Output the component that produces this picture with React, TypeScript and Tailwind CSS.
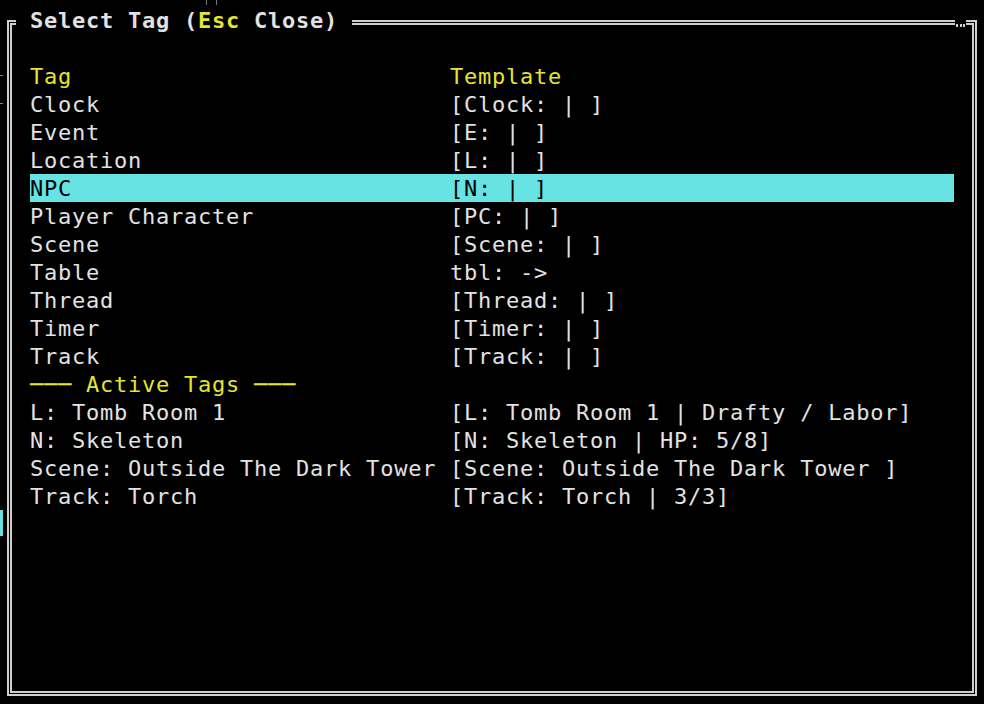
const tags: [string, string][] = [
  ["Clock", "[Clock: | ]"],
  ["Event", "[E: | ]"],
  ["Location", "[L: | ]"],
  ["NPC", "[N: | ]"],
  ["Player Character", "[PC: | ]"],
  ["Scene", "[Scene: | ]"],
  ["Table", "tbl: ->"],
  ["Thread", "[Thread: | ]"],
  ["Timer", "[Timer: | ]"],
  ["Track", "[Track: | ]"],
];

const active: [string, string][] = [
  ["L: Tomb Room 1", "[L: Tomb Room 1 | Drafty / Labor]"],
  ["N: Skeleton", "[N: Skeleton | HP: 5/8]"],
  ["Scene: Outside The Dark Tower", "[Scene: Outside The Dark Tower ]"],
  ["Track: Torch", "[Track: Torch | 3/3]"],
];

const selected = "NPC";

function Row({ left, right, className = "" }: { left: string; right: string; className?: string }) {
  return (
    <div className={`flex h-[28px] w-[924px] items-center pt-[2px] whitespace-pre ${className}`}>
      <span className="w-[420px]">{left}</span>
      <span>{right}</span>
    </div>
  );
}

export default function App() {
  return (
    <div
      className="relative h-[704px] w-[984px] overflow-hidden bg-black pl-[7px] pt-[20px] text-[22px] leading-[28px] tracking-[0.76px] text-[#e2e2e2]"
      style={{ fontFamily: '"DejaVu Sans Mono", "Liberation Mono", monospace' }}
    >
      {/* stray bits of the terminal behind the dialog */}
      <div className="absolute left-[206px] top-0 h-[5px] w-[1px] bg-[#777]" />
      <div className="absolute left-[216px] top-0 h-[5px] w-[1px] bg-[#777]" />
      <div className="absolute left-0 top-[75px] h-[1px] w-[3px] bg-[#888]" />
      <div className="absolute left-0 top-[103px] h-[1px] w-[3px] bg-[#888]" />
      <div className="absolute left-0 top-[510px] h-[26px] w-[3px] bg-[#66e0e0]" />

      <div className="relative h-[676px] w-[970px] border-[5px] border-double border-[#cfcfcf]">
        <div className="absolute left-[4px] top-[-19px] flex h-[28px] items-center bg-black pt-[2px] font-bold whitespace-pre">
          <span> Select Tag (</span>
          <span className="text-[#e5e52e]">Esc</span>
          <span> Close) </span>
        </div>
        <div className="absolute right-[6px] top-[-7px] flex h-[9px] w-[11px] items-end justify-between bg-black px-[1px]">
          <span className="h-[3px] w-[2px] bg-[#cfcfcf]" />
          <span className="h-[3px] w-[2px] bg-[#cfcfcf]" />
          <span className="h-[3px] w-[2px] bg-[#cfcfcf]" />
        </div>

        <div className="flex flex-col pl-[18px] pt-[37px]">
          <Row left="Tag" right="Template" className="text-[#e5e52e]" />
          {tags.map(([t, tpl]) => (
            <Row
              key={t}
              left={t}
              right={tpl}
              className={t === selected ? "bg-[#67e3e3] text-black" : ""}
            />
          ))}
          <div className="flex h-[28px] items-center pt-[2px] whitespace-pre text-[#e5e52e]">
            {"─── Active Tags ───"}
          </div>
          {active.map(([t, tpl]) => (
            <Row key={t} left={t} right={tpl} />
          ))}
        </div>
      </div>
    </div>
  );
}
